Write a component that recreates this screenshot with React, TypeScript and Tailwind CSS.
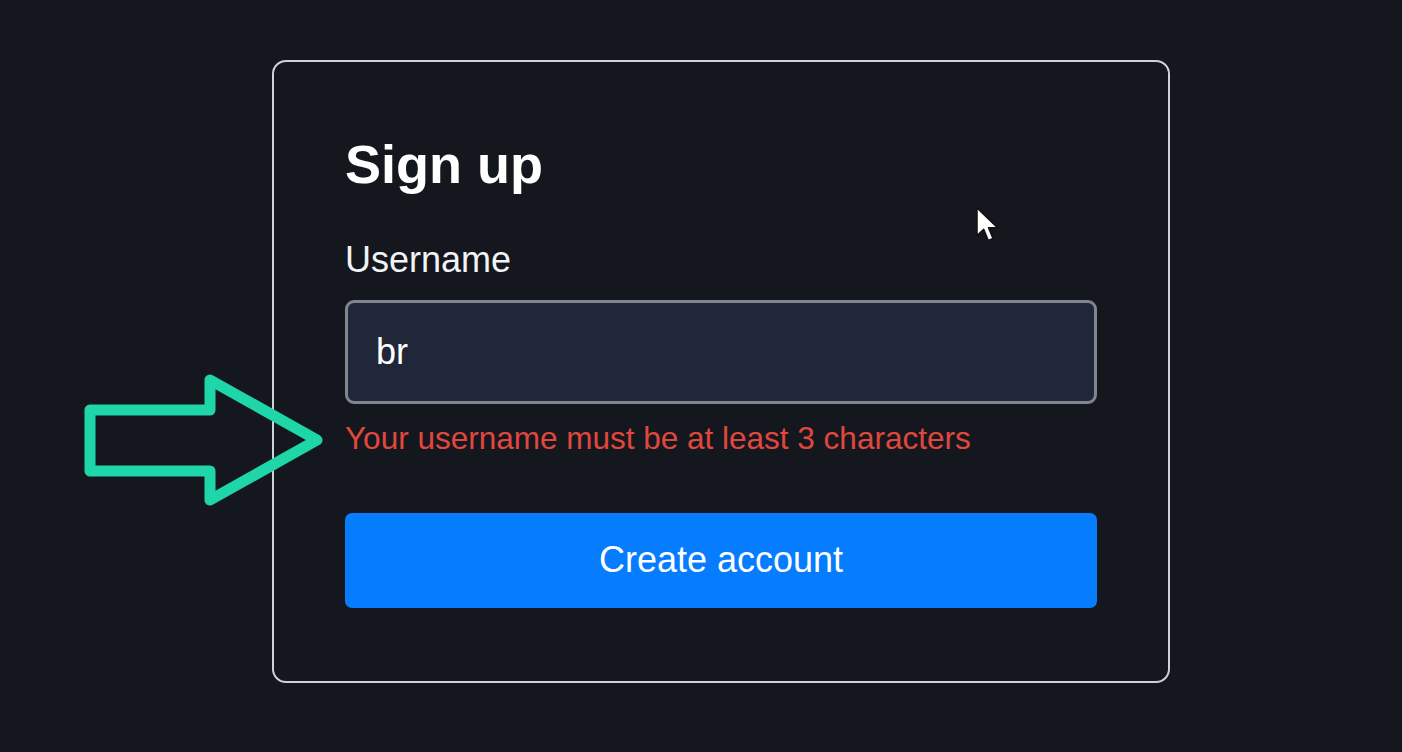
import React from 'react';

const font = { fontFamily: '"Liberation Sans", Arial, sans-serif' };

// Pfeil-Markierung über dem Formular
const Arrow: React.FC = () => (
  <svg className="absolute left-0 top-0 pointer-events-none" width="340" height="520" viewBox="0 0 340 520">
    <polygon
      points="90,410 210,410 210,380 317,440 210,500 210,471 90,471"
      fill="none"
      stroke="#1ed6a8"
      strokeWidth="11"
      strokeLinejoin="round"
    />
  </svg>
);

// Mauszeiger
const Cursor: React.FC = () => (
  <svg className="absolute left-[975px] top-[206px] pointer-events-none" width="28" height="40" viewBox="0 0 28 40">
    <path
      d="M2 2 L2 29.5 L8.7 23.3 L13.3 34.5 L18 32.5 L13.5 21.7 L22.5 21.7 Z"
      fill="#ffffff"
      stroke="#111111"
      strokeWidth="1.5"
      strokeLinejoin="round"
    />
  </svg>
);

export default function App() {
  return (
    <div className="relative w-[1402px] h-[752px] bg-[#15171e] overflow-hidden" style={font}>
      <div className="pl-[272px] pt-[60px]">
        <div className="w-[898px] rounded-[14px] border-2 border-[#cfd2d8] bg-[#15171e] px-[71px] pt-[72px] pb-[73px]">
          <h1 className="text-[54px] font-bold text-white leading-[1.117]">Sign up</h1>
          <label className="block mt-[46px] text-[36px] text-[#f1f3f6] leading-[1.117]">Username</label>
          <div className="mt-[19px] h-[104px] rounded-[9px] border-[3px] border-[#80858f] bg-[#1f2738] flex items-center pl-[28px] text-[36px] text-white">
            br
          </div>
          <p className="mt-[17px] text-[31.5px] text-[#e0473d] leading-[1.117]">
            Your username must be at least 3 characters
          </p>
          <button className="mt-[57px] w-full h-[95px] rounded-[7px] bg-[#067cff] text-[36px] text-white">
            Create account
          </button>
        </div>
      </div>
      <Arrow />
      <Cursor />
    </div>
  );
}
